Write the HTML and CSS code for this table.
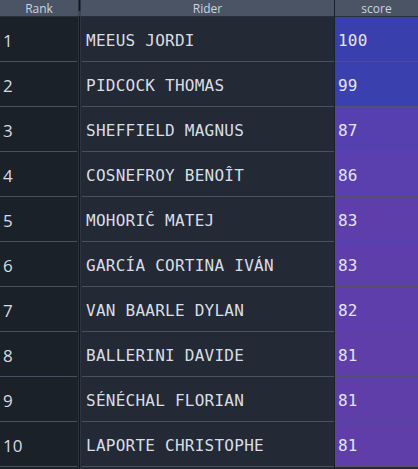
FILE: index.html
```html
<!DOCTYPE html>
<html>
<head>
<meta charset="utf-8">
<link rel="stylesheet" href="styles.css">
</head>
<body>
<div class="table">
  <div class="col rank-col">
    <div class="head">Rank</div>
    <div class="cell rank">1</div>
    <div class="cell rank">2</div>
    <div class="cell rank">3</div>
    <div class="cell rank">4</div>
    <div class="cell rank">5</div>
    <div class="cell rank">6</div>
    <div class="cell rank">7</div>
    <div class="cell rank">8</div>
    <div class="cell rank">9</div>
    <div class="cell rank">10</div>
  </div>
  <div class="splitter"><div class="knob"></div></div>
  <div class="col rider-col">
    <div class="head">Rider</div>
    <div class="cell rider">MEEUS JORDI</div>
    <div class="cell rider">PIDCOCK THOMAS</div>
    <div class="cell rider">SHEFFIELD MAGNUS</div>
    <div class="cell rider">COSNEFROY BENOÎT</div>
    <div class="cell rider">MOHORIČ MATEJ</div>
    <div class="cell rider">GARCÍA CORTINA IVÁN</div>
    <div class="cell rider">VAN BAARLE DYLAN</div>
    <div class="cell rider">BALLERINI DAVIDE</div>
    <div class="cell rider">SÉNÉCHAL FLORIAN</div>
    <div class="cell rider">LAPORTE CHRISTOPHE</div>
  </div>
  <div class="col score-col">
    <div class="head score-head">score</div>
    <div class="cell score s100">100</div>
    <div class="cell score s99">99</div>
    <div class="cell score s87">87</div>
    <div class="cell score s86">86</div>
    <div class="cell score s83">83</div>
    <div class="cell score s83">83</div>
    <div class="cell score s82">82</div>
    <div class="cell score s81">81</div>
    <div class="cell score s81">81</div>
    <div class="cell score s81">81</div>
  </div>
</div>
</body>
</html>
```
FILE: styles.css
```css
html, body {
  margin: 0;
  padding: 0;
  background: #1b2129;
  width: 418px;
  height: 469px;
  overflow: hidden;
}
.table {
  display: flex;
  height: 469px;
}
.col {
  display: flex;
  flex-direction: column;
}
.rank-col {
  width: 78px;
  background: #1b2129;
}
.rider-col {
  width: 253px;
  background: #232a35;
}
.score-col {
  flex: 1;
  background: #232a35;
  border-left: 1px solid #1b2129;
}
.splitter {
  width: 3px;
  background: #12171d;
  position: relative;
  border-left: 1px solid #2d3540;
  border-right: 1px solid #2d3540;
  box-sizing: border-box;
}
.knob {
  position: absolute;
  left: -1px;
  top: 11px;
  width: 3px;
  height: 5px;
  background: #3c4654;
}
.head {
  height: 17px;
  box-sizing: border-box;
  background: #4a5464;
  color: #cdd4de;
  font-family: "Open Sans", "Noto Sans", sans-serif;
  font-size: 12px;
  line-height: 17px;
  text-align: center;
  border-bottom: 1px solid #2a313b;
}
.cell {
  height: 45px;
  box-sizing: border-box;
  padding-top: 3px;
  border-bottom: 1px solid #48515f;
  display: flex;
  align-items: center;
  flex-shrink: 0;
}
.rank {
  padding-left: 3px;
  font-family: "Open Sans", "Noto Sans", sans-serif;
  font-size: 17px;
  color: #d6dce4;
  margin-right: 1px;
}
.rider {
  padding-left: 4px;
  font-family: "DejaVu Sans Mono", monospace;
  font-size: 16px;
  letter-spacing: 0.25px;
  color: #d9dee6;
  margin-left: 1px;
}
.score {
  padding-left: 3px;
  font-family: "DejaVu Sans Mono", monospace;
  font-size: 16px;
  letter-spacing: 0.2px;
  color: #e4e4f0;
  border-bottom-color: #4e5568;
}
.s100 { background: #3940ad; }
.s99 { background: #3a40ad; }
.s87 { background: #5640b0; }
.s86 { background: #5a3fae; }
.s83 { background: #5d3eab; }
.s82 { background: #5e3eab; }
.s81 { background: #5f3eaa; }
```
